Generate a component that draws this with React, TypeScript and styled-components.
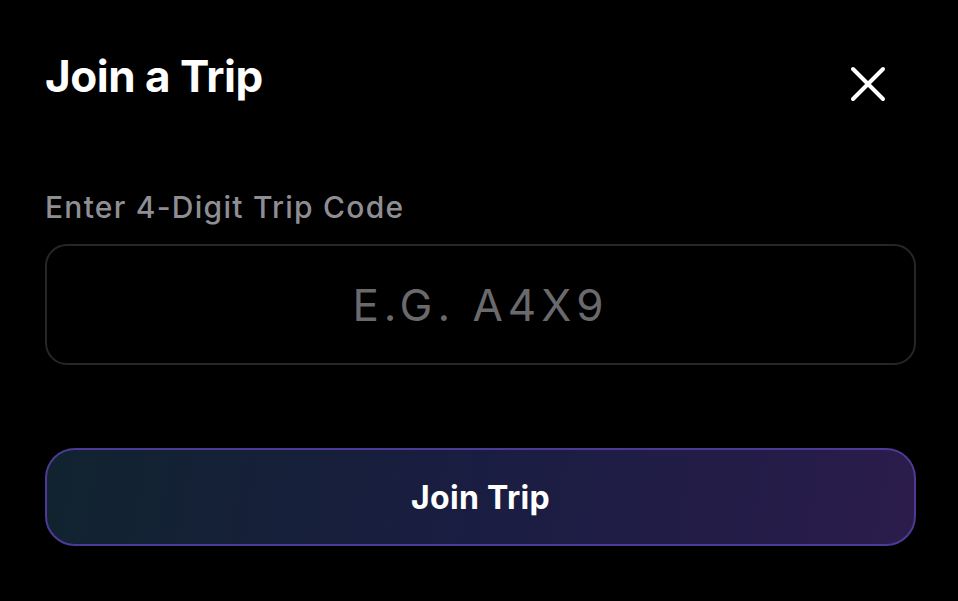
import React, { useState } from "react";
import styled, { createGlobalStyle } from "styled-components";

const GlobalStyle = createGlobalStyle`
  html, body {
    margin: 0;
    padding: 0;
    background: #000;
  }
  body {
    font-family: Inter, "Noto Sans", sans-serif;
    -webkit-font-smoothing: antialiased;
  }
`;

export default function App() {
  const [code, setCode] = useState("");

  return (
    <>
      <GlobalStyle />
      <Sheet>
        <Header>
          <Title>Join a Trip</Title>
          <CloseBtn aria-label="Close">
            <svg width="36" height="36" viewBox="0 0 36 36" fill="none">
              <path
                d="M3 3L33 33M33 3L3 33"
                stroke="#fff"
                strokeWidth="4"
                strokeLinecap="round"
              />
            </svg>
          </CloseBtn>
        </Header>

        <Field>
          <Label htmlFor="trip-code">Enter 4-Digit Trip Code</Label>
          <CodeInput
            id="trip-code"
            maxLength={4}
            placeholder="E.G. A4X9"
            value={code}
            onChange={(e) => setCode(e.target.value.toUpperCase())}
          />
        </Field>

        <JoinBtn>Join Trip</JoinBtn>
      </Sheet>
    </>
  );
}

const Sheet = styled.main`
  box-sizing: border-box;
  width: 958px;
  height: 601px;
  padding: 50px 42px 0 45px;
  background: #000;
  display: flex;
  flex-direction: column;
`;

const Header = styled.div`
  display: flex;
  justify-content: space-between;
  align-items: flex-start;
`;

const Title = styled.h1`
  margin: 0;
  font-size: 44px;
  line-height: 52px;
  font-weight: 700;
  color: #fff;
  letter-spacing: -0.5px;
`;

const CloseBtn = styled.button`
  margin: 16px 30px 0 0;
  padding: 0;
  border: 0;
  background: none;
  width: 36px;
  height: 36px;
  display: flex;
  cursor: pointer;
`;

const Field = styled.div`
  display: flex;
  flex-direction: column;
  gap: 19px;
  margin-top: 87px;
`;

const Label = styled.label`
  font-size: 30px;
  line-height: 36px;
  font-weight: 500;
  letter-spacing: 1.25px;
  color: #8e8e94;
`;

const CodeInput = styled.input`
  box-sizing: border-box;
  height: 121px;
  width: 100%;
  border: 2px solid #262628;
  border-radius: 22px;
  background: #000;
  color: #fff;
  text-align: center;
  font-family: Inter, "Noto Sans", sans-serif;
  font-size: 44px;
  font-weight: 400;
  letter-spacing: 5px;
  outline: none;

  &::placeholder {
    color: #6a6a6c;
  }
`;

const JoinBtn = styled.button`
  box-sizing: border-box;
  margin-top: 83px;
  height: 98px;
  width: 100%;
  border: 2px solid #4d3a96;
  border-radius: 30px;
  background: linear-gradient(100deg, #11232f 0%, #1a1d42 50%, #2b1c4c 100%);
  color: #fff;
  font-family: Inter, "Noto Sans", sans-serif;
  font-size: 32px;
  font-weight: 700;
  letter-spacing: 0.3px;
  cursor: pointer;
`;
